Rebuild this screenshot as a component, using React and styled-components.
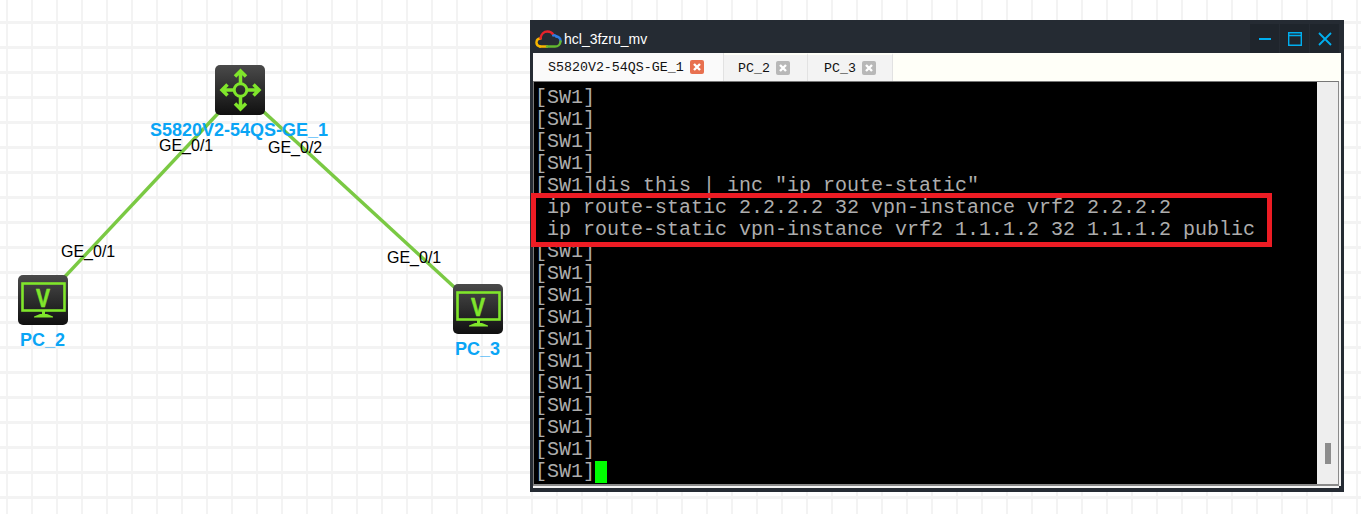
import React from 'react';
import styled, { createGlobalStyle } from 'styled-components';

const GlobalStyle = createGlobalStyle`
  html, body {
    margin: 0;
    padding: 0;
    background: #fff;
    overflow: hidden;
  }
`;

const Canvas = styled.div`
  position: relative;
  width: 1361px;
  height: 514px;
  overflow: hidden;
  background-color: #fff;
  background-image:
    linear-gradient(to right, transparent 6px, #f3f3f3 6px, #f3f3f3 8px, transparent 8px),
    linear-gradient(to bottom, transparent 21px, #f3f3f3 21px, #f3f3f3 24px, transparent 24px);
  background-size: 25px 25px;
  font-family: "Liberation Sans", Arial, sans-serif;
`;

const Links = styled.svg`
  position: absolute;
  left: 0;
  top: 0;
`;

const DeviceIcon = styled.div`
  position: absolute;
  left: ${(p) => p.$x}px;
  top: ${(p) => p.$y}px;
  width: 50px;
  height: 50px;
  border-radius: 5px;
  background: linear-gradient(to bottom, #4a4a4a, #101010);
`;

const DeviceName = styled.span`
  position: absolute;
  left: ${(p) => p.$x}px;
  top: ${(p) => p.$y}px;
  font-size: 18px;
  line-height: 18px;
  font-weight: 700;
  color: #0aa5f5;
  white-space: nowrap;
`;

const PortLabel = styled.span`
  position: absolute;
  left: ${(p) => p.$x}px;
  top: ${(p) => p.$y}px;
  font-size: 16px;
  line-height: 18px;
  color: #000;
  white-space: nowrap;
`;

const Window = styled.section`
  position: absolute;
  left: 530px;
  top: 20px;
  width: 814px;
  height: 472px;
  box-sizing: border-box;
  padding: 0 3px 4px;
  background: #252b33;
  display: flex;
  flex-direction: column;
`;

const TitleBar = styled.header`
  height: 33px;
  flex: none;
  display: flex;
  align-items: flex-end;
  padding-right: 2px;
`;

const TitleLogo = styled.svg`
  margin: 0 2px 5px 2px;
  flex: none;
`;

const TitleText = styled.span`
  flex: 1;
  color: #fff;
  font-size: 14px;
  line-height: 16px;
  padding-bottom: 6px;
`;

const WinButton = styled.button`
  width: 29px;
  height: 29px;
  margin-left: 1px;
  padding: 0;
  border: 0;
  background: #1f252c;
  display: flex;
  align-items: center;
  justify-content: center;
`;

const TabBar = styled.nav`
  height: 28px;
  flex: none;
  display: flex;
  background: #fffff8;
`;

const Tab = styled.div`
  width: ${(p) => p.$width}px;
  box-sizing: border-box;
  display: flex;
  align-items: center;
  padding-left: ${(p) => p.$pad}px;
  gap: 6px;
  background: ${(p) => (p.$active ? '#fafafa' : '#f3f3f3')};
  border-right: 1px solid #e2e2e2;
  border-top: ${(p) => (p.$active ? 0 : 2)}px solid #fffff8;
  font-family: "Liberation Mono", "Courier New", monospace;
  font-size: 13.3px;
  color: #111;
  white-space: nowrap;
`;

const TabClose = styled.span`
  width: 14px;
  height: 14px;
  box-sizing: border-box;
  border-radius: 2px;
  background: ${(p) => (p.$active ? '#e8704f' : '#b8b8b8')};
  display: flex;
  align-items: center;
  justify-content: center;
`;

const TerminalFrame = styled.div`
  position: relative;
  flex: 1;
  min-height: 0;
  display: flex;
  box-sizing: border-box;
  border-top: 1px solid #777;
  border-left: 1px solid #777;
  border-bottom: 2px solid #8a8a8a;
  border-right: 1px solid #8a8a8a;
  margin-right: 2px;
  margin-bottom: 2px;
  box-shadow: 0 2px 0 #f4f4f4, 2px 0 0 #f4f4f4;
`;

const Screen = styled.pre`
  flex: 1;
  margin: 0;
  padding: 5px 0 0 1px;
  background: #000;
  color: #adadad;
  font-family: "Liberation Mono", "Courier New", monospace;
  font-size: 20px;
  line-height: 22px;
  overflow: hidden;
`;

const Cursor = styled.span`
  display: inline-block;
  width: 12px;
  height: 22px;
  vertical-align: top;
  background: #00ff00;
`;

const Scrollbar = styled.div`
  position: relative;
  width: 21px;
  flex: none;
  background: #eee;
`;

const ScrollThumb = styled.div`
  position: absolute;
  left: 8px;
  bottom: 20px;
  width: 6px;
  height: 21px;
  background: #8c8c8c;
`;

const Highlight = styled.div`
  position: absolute;
  left: -3px;
  top: 111px;
  width: 741px;
  height: 54px;
  box-sizing: border-box;
  border: 5px solid #ed1c24;
`;

const links = [
  { x1: 240, y1: 90, x2: 43, y2: 300 },
  { x1: 240, y1: 90, x2: 478, y2: 309 },
];

const lines = [
  '[SW1]',
  '[SW1]',
  '[SW1]',
  '[SW1]',
  '[SW1]dis this | inc "ip route-static"',
  ' ip route-static 2.2.2.2 32 vpn-instance vrf2 2.2.2.2',
  ' ip route-static vpn-instance vrf2 1.1.1.2 32 1.1.1.2 public',
  '[SW1]',
  '[SW1]',
  '[SW1]',
  '[SW1]',
  '[SW1]',
  '[SW1]',
  '[SW1]',
  '[SW1]',
  '[SW1]',
  '[SW1]',
];

function SwitchGlyph() {
  return (
    <svg width="50" height="50" viewBox="0 0 50 50" fill="none" stroke="#80e62b" strokeWidth="3.500">
      <circle cx="25.500" cy="25" r="6.300" strokeWidth="3" />
      <path d="M25.500 18V7M20 11.500l5.500-5.500 5.500 5.500" />
      <path d="M25.500 32v11M20 38.500l5.500 5.500 5.500-5.500" />
      <path d="M18.500 25H8M12.500 19.500L7 25l5.500 5.500" />
      <path d="M32.500 25H43M38.500 19.500L44 25l-5.500 5.500" />
    </svg>
  );
}

function PcGlyph() {
  return (
    <svg width="50" height="50" viewBox="0 0 50 50" fill="none">
      <rect x="4.500" y="8.500" width="42" height="27" stroke="#80e62b" strokeWidth="2.600" />
      <text
        x="18"
        y="31.500"
        fill="#80e62b"
        stroke="#80e62b"
        strokeWidth="0.600"
        fontFamily="Liberation Sans, Arial, sans-serif"
        fontWeight="700"
        fontSize="26"
        textLength="14"
        lengthAdjust="spacingAndGlyphs"
      >
        V
      </text>
      <path d="M24 36h3v3h2l6 2.500v1H16v-1l6-2.500h2z" fill="#80e62b" />
    </svg>
  );
}

function CloudLogo() {
  return (
    <TitleLogo width="27" height="18" viewBox="0 0 27 18" fill="none" strokeWidth="2.400" strokeLinecap="round">
      <path d="M5 16.500C2.500 16 1.300 14 1.500 12C1.700 9.800 3.500 8.500 5.500 8.500" stroke="#f7b500" />
      <path d="M5 16.500H12" stroke="#f7b500" />
      <path d="M5.500 8.500C6 4 9 1.500 12.500 1.500C15 1.500 17 2.600 18.200 4.500" stroke="#e8232a" />
      <path d="M18.200 5.500C19 5.100 20.500 5.300 21.500 6.500" stroke="#2f7de1" />
      <path d="M21 6.300C24 6.800 25.700 9 25.500 11.500" stroke="#2f7de1" />
      <path d="M25.500 11.500C25.300 14.500 23 16.500 20 16.500H12" stroke="#62b82f" />
    </TitleLogo>
  );
}

function CloseMark() {
  return (
    <svg width="10" height="10" viewBox="0 0 10 10" stroke="#fff" strokeWidth="2.400">
      <path d="M2 2l6 6M8 2l-6 6" />
    </svg>
  );
}

function App() {
  return (
    <Canvas>
      <GlobalStyle />
      <Links width="1361" height="514">
        {links.map((l) => (
          <line key={l.x2} {...l} stroke="#7ac943" strokeWidth="3.400" />
        ))}
      </Links>

      <DeviceIcon $x={215} $y={65}><SwitchGlyph /></DeviceIcon>
      <DeviceIcon $x={18} $y={275}><PcGlyph /></DeviceIcon>
      <DeviceIcon $x={453} $y={284}><PcGlyph /></DeviceIcon>

      <DeviceName $x={150} $y={121}>S5820V2-54QS-GE_1</DeviceName>
      <DeviceName $x={20} $y={331}>PC_2</DeviceName>
      <DeviceName $x={455} $y={340}>PC_3</DeviceName>

      <PortLabel $x={159} $y={137}>GE_0/1</PortLabel>
      <PortLabel $x={268} $y={139}>GE_0/2</PortLabel>
      <PortLabel $x={61} $y={243}>GE_0/1</PortLabel>
      <PortLabel $x={387} $y={249}>GE_0/1</PortLabel>

      <Window>
        <TitleBar>
          <CloudLogo />
          <TitleText>hcl_3fzru_mv</TitleText>
          <WinButton aria-label="minimize">
            <svg width="14" height="14" viewBox="0 0 14 14" stroke="#00aeef" strokeWidth="2">
              <path d="M1 7h12" />
            </svg>
          </WinButton>
          <WinButton aria-label="maximize">
            <svg width="14" height="14" viewBox="0 0 14 14" fill="none" stroke="#00aeef" strokeWidth="1.400">
              <path d="M.7.700h12.600v12.600H.7zM.7 3.500h12.600" />
            </svg>
          </WinButton>
          <WinButton aria-label="close">
            <svg width="14" height="14" viewBox="0 0 14 14" stroke="#00aeef" strokeWidth="1.800">
              <path d="M1 1l12 12M13 1L1 13" />
            </svg>
          </WinButton>
        </TitleBar>

        <TabBar>
          <Tab $active $width={191} $pad={15}>S5820V2-54QS-GE_1<TabClose $active><CloseMark /></TabClose></Tab>
          <Tab $width={84} $pad={14}>PC_2<TabClose><CloseMark /></TabClose></Tab>
          <Tab $width={85} $pad={16}>PC_3<TabClose><CloseMark /></TabClose></Tab>
        </TabBar>

        <TerminalFrame>
          <Screen>
            {lines.join('\n')}
            {'\n[SW1]'}
            <Cursor />
          </Screen>
          <Scrollbar><ScrollThumb /></Scrollbar>
          <Highlight />
        </TerminalFrame>
      </Window>
    </Canvas>
  );
}

export default App;
